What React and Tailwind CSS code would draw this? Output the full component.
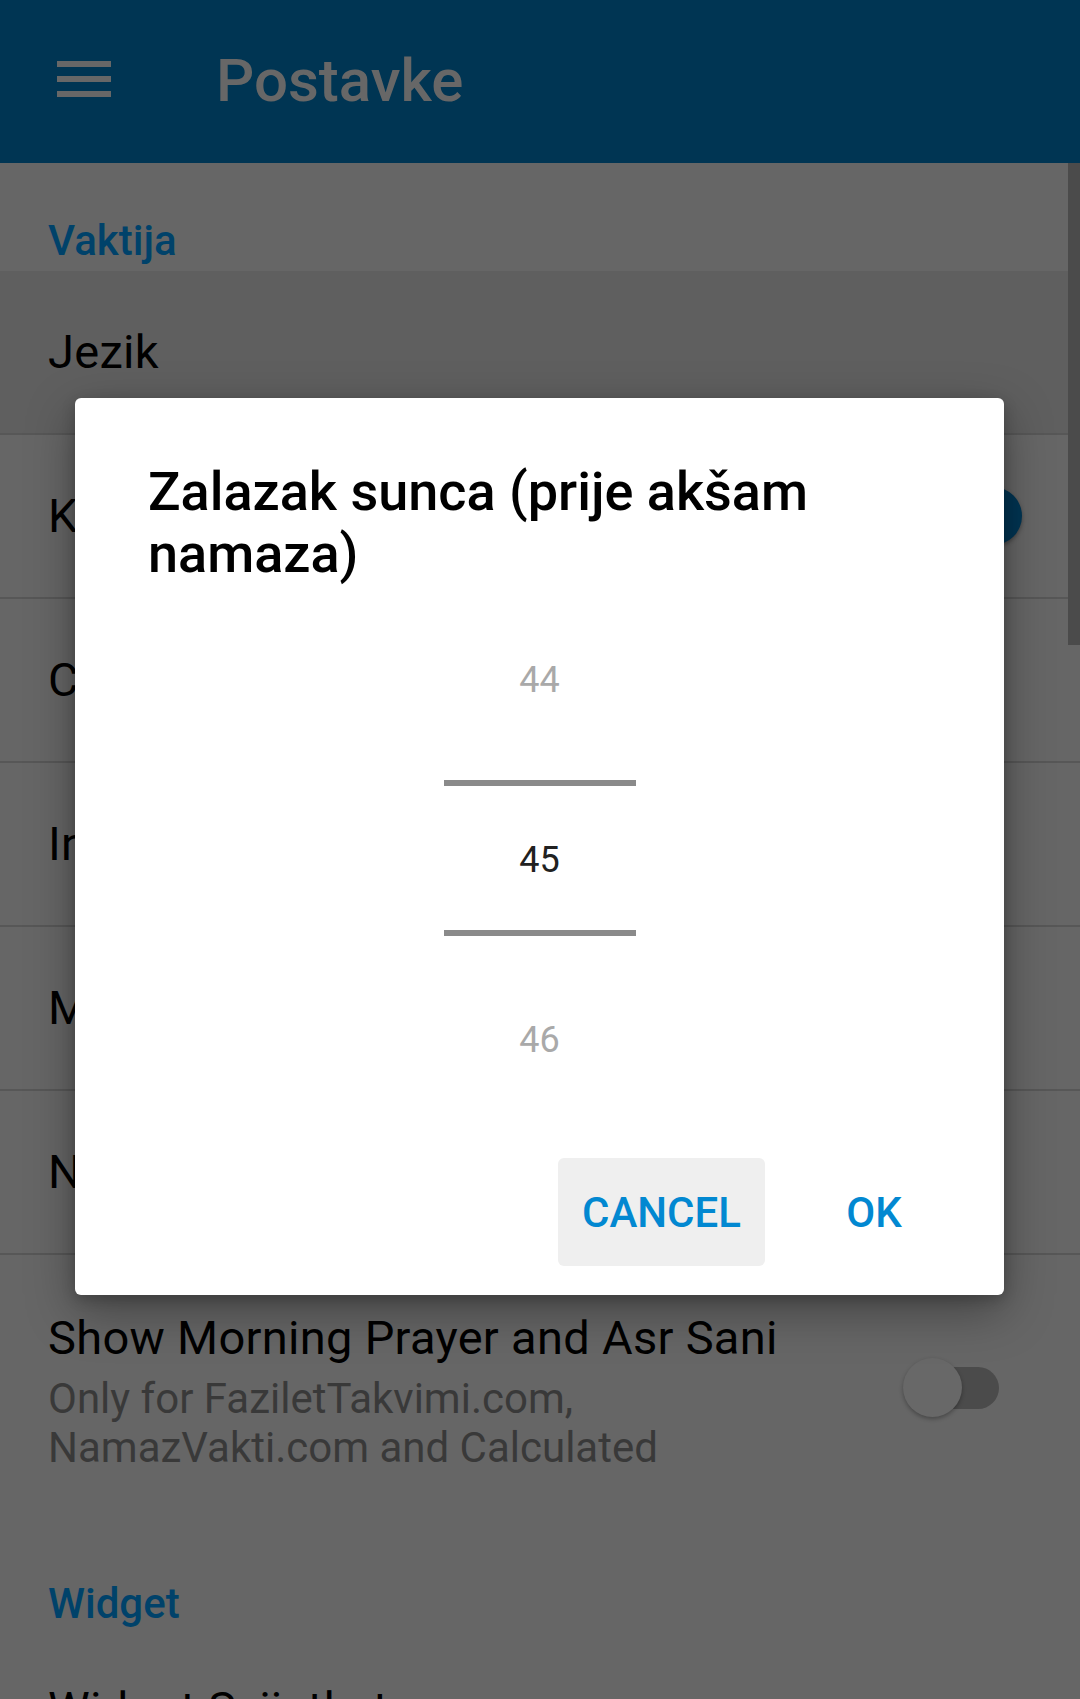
import React from "react";

function Hamburger() {
  return (
    <div className="flex flex-col gap-[9px] w-[54px] mt-[61px] ml-[57px]">
      <div className="h-[6px] bg-[#676767]" />
      <div className="h-[6px] bg-[#676767]" />
      <div className="h-[6px] bg-[#676767]" />
    </div>
  );
}

function SwitchOff() {
  return (
    <div className="relative w-[96px] h-[60px] shrink-0 mb-[8px]">
      <div className="absolute left-[9px] top-[9px] w-[87px] h-[42px] rounded-full bg-[#4b4b4b]" />
      <div className="absolute left-0 top-0 w-[59px] h-[59px] rounded-full bg-[#686868] shadow-[0_2px_4px_rgba(0,0,0,0.3)]" />
    </div>
  );
}

function SwitchOn() {
  return (
    <div className="relative w-[96px] h-[58px] shrink-0">
      <div className="absolute left-0 top-[8px] w-[87px] h-[42px] rounded-full bg-[#0f3a55]" />
      <div className="absolute right-0 top-0 w-[58px] h-[58px] rounded-full bg-[#003553] shadow-[0_2px_4px_rgba(0,0,0,0.35)]" />
    </div>
  );
}

function Row({ children, right, className = "" }) {
  return (
    <div
      className={`h-[164px] border-b-2 border-[#575757] flex items-center justify-between pl-[48px] ${className}`}
    >
      <div className="text-[47px] leading-[52px] tracking-[0.3px] text-black whitespace-nowrap">{children}</div>
      {right}
    </div>
  );
}

export default function App() {
  return (
    <div
      className="relative w-[1080px] h-[1699px] overflow-hidden bg-[#666666]"
      style={{ fontFamily: "Roboto, 'Noto Sans', Arial, sans-serif" }}
    >
      {/* Toolbar */}
      <div className="h-[163px] bg-[#003553] flex items-start">
        <Hamburger />
        <div className="ml-[105px] mt-[51px] text-[60px] leading-[60px] font-medium text-[#676767]">
          Postavke
        </div>
      </div>

      {/* Section: Vaktija */}
      <div className="pl-[48px] pt-[57px] pb-[9px] text-[42px] leading-[42px] font-medium text-[#00426a]">
        Vaktija
      </div>

      <Row className="bg-[#5f5f5f]">Jezik</Row>
      <Row className="pr-[58px]" right={<SwitchOn />}>
        Kaza namaz
      </Row>
      <Row>Cuvanje podataka</Row>
      <Row>Interval obavijesti</Row>
      <Row>Metoda proračuna</Row>
      <Row>Notifikacije</Row>

      {/* Show Morning Prayer row */}
      <div className="flex items-center justify-between pl-[48px] pr-[81px] pt-[57px] pb-[54px]">
        <div>
          <div className="text-[47px] leading-[52px] tracking-[0.3px] text-black whitespace-nowrap">
            Show Morning Prayer and Asr Sani
          </div>
          <div className="mt-[10px] text-[42px] leading-[49px] text-[#393939]">
            Only for FaziletTakvimi.com,
            <br />
            NamazVakti.com and Calculated
          </div>
        </div>
        <SwitchOff />
      </div>

      {/* Section: Widget */}
      <div className="pl-[48px] pt-[57px] pb-[9px] text-[42px] leading-[42px] font-medium text-[#00426a]">
        Widget
      </div>
      <div className="pl-[48px] pt-[49px] text-[47px] leading-[52px] tracking-[0.3px] text-black whitespace-nowrap">
        Widget Svijetla tema
      </div>

      {/* Scrollbar */}
      <div className="absolute right-0 top-[163px] w-[12px] h-[482px] bg-[#4b4b4b]" />

      {/* Dialog */}
      <div className="absolute left-[75px] top-[398px] w-[929px] h-[897px] bg-white rounded-[6px] shadow-[0_16px_48px_rgba(0,0,0,0.35),0_4px_14px_rgba(0,0,0,0.2)] flex flex-col">
        <div className="pl-[73px] pt-[63px] text-[54px] leading-[62px] font-medium text-black">
          Zalazak sunca (prije akšam
          <br />
          namaza)
        </div>

        <div className="flex flex-col items-center">
          <div className="mt-[77px] text-[36px] leading-[36px] text-[#a9a9a9]">44</div>
          <div className="mt-[82px] w-[192px] h-[6px] bg-[#8a8a8a]" />
          <div className="mt-[56px] text-[36px] leading-[36px] text-[#212121]">45</div>
          <div className="mt-[52px] w-[192px] h-[6px] bg-[#8a8a8a]" />
          <div className="mt-[86px] text-[36px] leading-[36px] text-[#a9a9a9]">46</div>
        </div>

        <div className="mt-auto mb-[29px] flex justify-end items-center gap-[25px] pr-[46px]">
          <div className="w-[207px] h-[108px] rounded-[6px] bg-[#efefef] flex items-center justify-center text-[42px] font-medium text-[#0288d1]">
            CANCEL
          </div>
          <div className="w-[168px] h-[108px] flex items-center justify-center text-[42px] font-medium text-[#0288d1]">
            OK
          </div>
        </div>
      </div>
    </div>
  );
}
